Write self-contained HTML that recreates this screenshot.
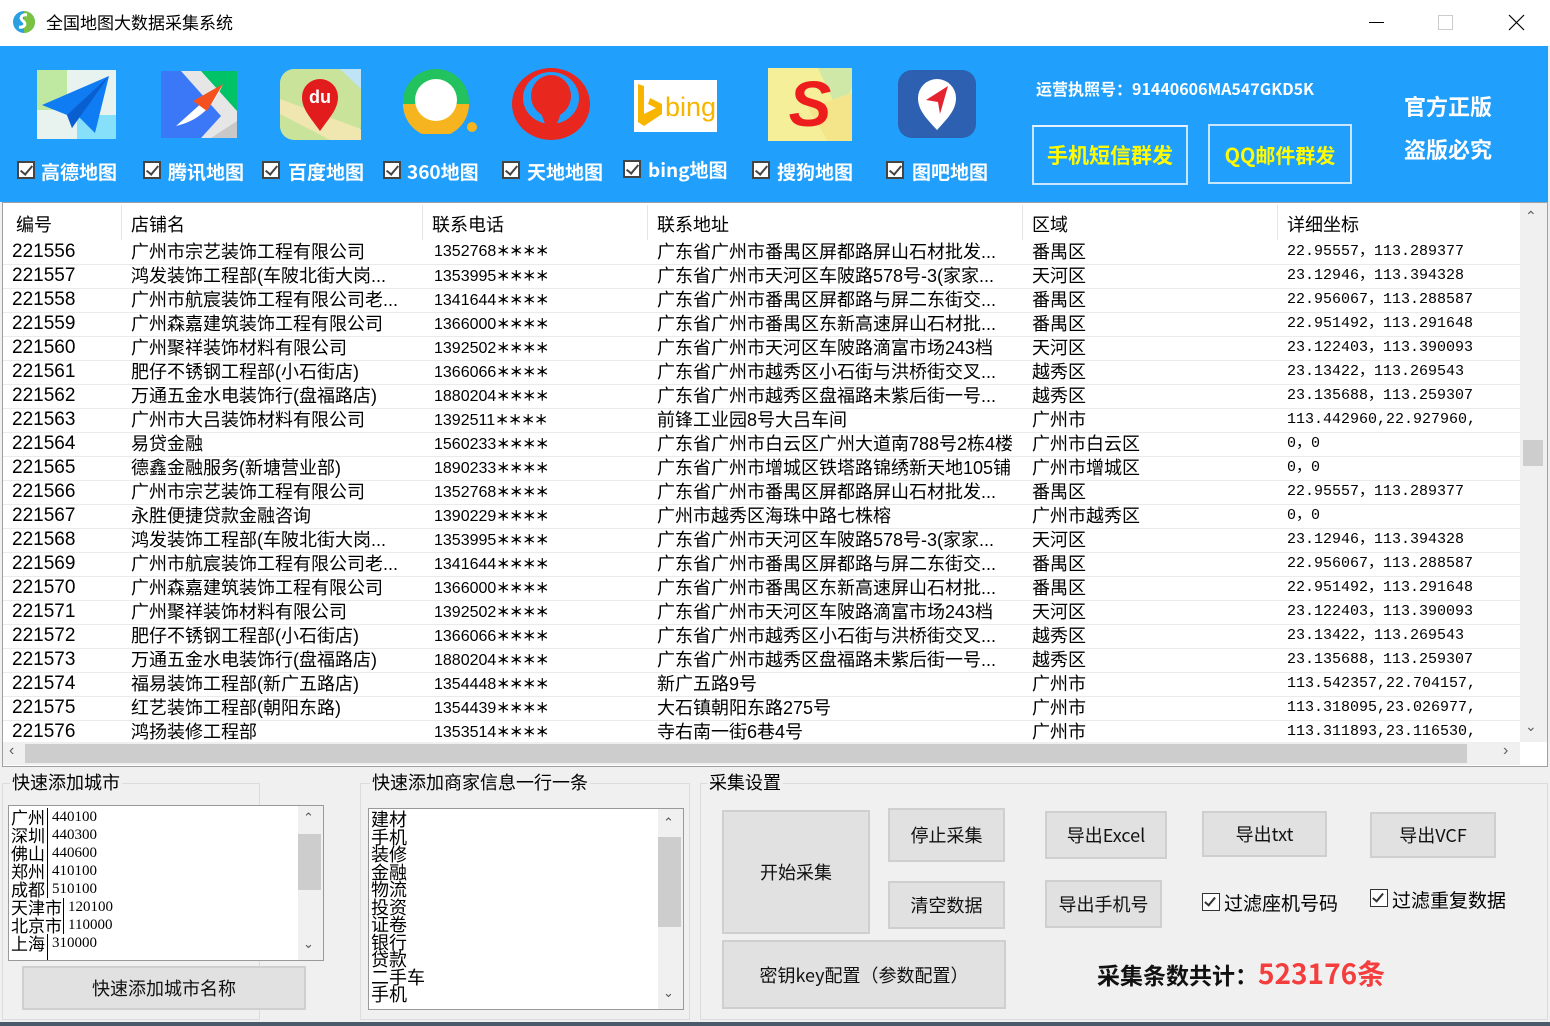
<!DOCTYPE html>
<html><head><meta charset="utf-8"><style>
*{margin:0;padding:0;box-sizing:border-box}
body{width:1550px;height:1026px;background:#f0f0f0;position:relative;overflow:hidden;font-family:"Liberation Sans","Noto Sans CJK SC",sans-serif}
.a{position:absolute}
.cjk{font-family:"Noto Sans CJK SC",sans-serif}
.cb{position:absolute;width:18px;height:18px;border:2px solid #444;background:#fff}
.cb::after{content:"";position:absolute;left:4px;top:0px;width:5px;height:10px;border:solid #444;border-width:0 2px 2px 0;transform:rotate(40deg)}
.lbl{position:absolute;color:#fff;font-weight:bold;font-size:19px;top:158px;font-family:"Noto Sans CJK SC",sans-serif}
table{border-collapse:collapse;table-layout:fixed}
td{height:24px;border-bottom:1px solid #eaeaea;white-space:nowrap;overflow:hidden;font-size:18px;line-height:22px;color:#000;padding-left:9px;font-family:"Liberation Sans","Noto Sans CJK SC",sans-serif}
td.n{font-size:19px;padding-left:9px;font-family:"Liberation Sans Narrow","Liberation Sans",sans-serif}
td.p{font-size:16px;font-family:"Liberation Sans Narrow","Liberation Sans","Noto Sans CJK SC",sans-serif;padding-left:11px}
td.p span{font-size:14px;font-weight:bold;letter-spacing:-1px}
td.c{font-size:15px;font-family:"Liberation Mono","Noto Sans CJK SC",monospace}
.btn{position:absolute;background:#e1e1e1;border:2px solid #cfcfcf;display:flex;align-items:center;justify-content:center;font-size:18px;color:#111;font-family:"Noto Sans CJK SC",sans-serif}
.gb{position:absolute;border:1px solid #dcdcdc}
.gt{position:absolute;background:#f0f0f0;font-size:18px;font-family:"Noto Sans CJK SC",sans-serif;padding:0 2px;line-height:20px}
</style></head><body>
<div class="a" style="left:0;top:0;width:1550px;height:46px;background:#fff"></div>
<svg class="a" style="left:12px;top:10px" width="24" height="24" viewBox="0 0 24 24"><circle cx="12" cy="12" r="11" fill="#2aa0e0"/><path d="M12 1a11 11 0 0 1 0 22z" fill="#7cc242"/><path d="M15 5c-5-1-8 3-4 6s1 7-4 6" stroke="#fff" stroke-width="3" fill="none"/></svg>
<div class="a cjk" style="left:46px;top:9px;font-size:17px;color:#000">全国地图大数据采集系统</div>
<div class="a" style="left:1369px;top:22px;width:15px;height:1px;background:#000"></div>
<div class="a" style="left:1438px;top:15px;width:15px;height:15px;border:1px solid #ccc"></div>
<svg class="a" style="left:1508px;top:14px" width="17" height="17"><path d="M1 1L16 16M16 1L1 16" stroke="#000" stroke-width="1.2"/></svg>
<div class="a" style="left:0;top:46px;width:1548px;height:156px;background:#209ffd"></div>
<svg class="a" style="left:37px;top:70px" width="79" height="69" viewBox="0 0 79 69"><rect width="79" height="69" fill="#e8f3f0"/><rect width="30" height="40" fill="#bfe9a0"/><rect x="40" y="45" width="39" height="24" fill="#86e0fa"/><path d="M72 6L5 35 30 45 35 58 42 47 58 63z" fill="#0f7cf4"/><path d="M72 6L30 45 35 58z" fill="#0a5fd0"/></svg>
<svg class="a" style="left:161px;top:71px" width="76" height="67" viewBox="0 0 76 67"><rect width="76" height="67" fill="#3b78f7"/><path d="M20 0H76V67H40L60 45 20 0z" fill="#e6e6e6"/><path d="M40 0H76V40z" fill="#00c266"/><path d="M50 67H76V50z" fill="#c8c8c8"/><path d="M62 13L15 55 C35 50 50 40 62 13z" fill="#fff"/><path d="M62 13L32 30 46 40z" fill="#f4511e"/></svg>
<svg class="a" style="left:280px;top:69px" width="81" height="71" viewBox="0 0 81 71"><rect width="81" height="71" rx="14" fill="#c9e39a"/><path d="M0 30L81 60V71H50L0 45z" fill="#efe6b0"/><path d="M60 0H81V20z" fill="#bfe4f6"/><path d="M40 62C30 48 22 40 22 28a18 18 0 0 1 36 0c0 12-8 20-18 34z" fill="#e21c1c"/><text x="40" y="34" font-size="18" fill="#fff" text-anchor="middle" font-family="Liberation Sans" font-weight="bold">du</text></svg>
<svg class="a" style="left:398px;top:68px" width="80" height="66" viewBox="0 0 80 66"><circle cx="38" cy="34" r="33" fill="#22c35e"/><path d="M5 36a33 33 0 0 0 66 0z" fill="#f6b51e"/><circle cx="38" cy="32" r="21" fill="#fff"/><circle cx="74" cy="59" r="5" fill="#f6b51e"/></svg>
<svg class="a" style="left:511px;top:68px" width="80" height="72" viewBox="0 0 80 72"><ellipse cx="40" cy="36" rx="39" ry="36" fill="#e8281e"/><ellipse cx="40" cy="30" rx="28" ry="26" fill="#209ffd"/><ellipse cx="40" cy="28" rx="20" ry="21" fill="#e8281e"/><path d="M30 45L40 72 50 45z" fill="#e8281e"/></svg>
<svg class="a" style="left:634px;top:80px" width="83" height="52" viewBox="0 0 83 52"><rect width="83" height="52" fill="#fff"/><path d="M4 4L10 6V34L22 28 14 24 16 18 28 24V34L10 46 4 42z" fill="#f7b500"/><text x="31" y="36" font-size="27" fill="#f7b500" font-family="Liberation Sans Narrow,Liberation Sans">bing</text></svg>
<svg class="a" style="left:768px;top:68px" width="84" height="73" viewBox="0 0 84 73"><rect width="84" height="73" fill="#f5ef9a"/><path d="M50 0H84V20L60 73H84V73z" fill="#cfe8a8"/><path d="M40 40L84 25V73H60z" fill="#f4e58a"/><text x="42" y="58" font-size="64" fill="#ee1d1d" font-family="Liberation Sans" font-weight="bold" text-anchor="middle" font-style="italic">S</text></svg>
<svg class="a" style="left:898px;top:70px" width="78" height="68" viewBox="0 0 78 68"><rect width="78" height="68" rx="14" fill="#2d60b0"/><path d="M39 60C28 48 20 40 20 28a19 19 0 0 1 38 0c0 12-8 20-19 32z" fill="#fff"/><path d="M50 16L28 30 40 32 42 44z" fill="#e52230"/></svg>
<div class="cb" style="left:17px;top:161px"></div><div class="lbl" style="left:41px">高德地图</div>
<div class="cb" style="left:143px;top:161px"></div><div class="lbl" style="left:168px">腾讯地图</div>
<div class="cb" style="left:262px;top:161px"></div><div class="lbl" style="left:288px">百度地图</div>
<div class="cb" style="left:383px;top:161px"></div><div class="lbl" style="left:407px">360地图</div>
<div class="cb" style="left:502px;top:161px"></div><div class="lbl" style="left:527px">天地地图</div>
<div class="cb" style="left:623px;top:160px"></div><div class="lbl" style="left:648px;top:156px">bing地图</div>
<div class="cb" style="left:752px;top:161px"></div><div class="lbl" style="left:777px">搜狗地图</div>
<div class="cb" style="left:886px;top:161px"></div><div class="lbl" style="left:912px">图吧地图</div>
<div class="a cjk" style="left:1036px;top:76px;color:#fff;font-weight:bold;font-size:16px">运营执照号：91440606MA547GKD5K</div>
<div class="a cjk" style="left:1032px;top:125px;width:156px;height:60px;border:2px solid #c9e6ff;border-top-color:#e6f3ff;color:#fffb00;font-weight:bold;font-size:21px;display:flex;align-items:center;justify-content:center">手机短信群发</div>
<div class="a cjk" style="left:1208px;top:124px;width:144px;height:60px;border:2px solid #c9e6ff;color:#fffb00;font-weight:bold;font-size:20px;display:flex;align-items:center;justify-content:center">QQ邮件群发</div>
<div class="a cjk" style="left:1404px;top:90px;color:#fff;font-size:22px;font-weight:bold">官方正版</div>
<div class="a cjk" style="left:1404px;top:133px;color:#fff;font-size:22px;font-weight:bold">盗版必究</div>
<div class="a" style="left:2px;top:202px;width:1546px;height:565px;background:#fff;border:1px solid #a0a0a0"></div>
<div class="a" style="left:3px;top:205px;height:35px;width:1517px">
 <div class="a cjk" style="left:13px;top:6px;font-size:18px">编号</div>
 <div class="a" style="left:118px;top:0;width:1px;height:35px;background:#e5e5e5"></div>
 <div class="a cjk" style="left:128px;top:6px;font-size:18px">店铺名</div>
 <div class="a" style="left:419px;top:0;width:1px;height:35px;background:#e5e5e5"></div>
 <div class="a cjk" style="left:429px;top:6px;font-size:18px">联系电话</div>
 <div class="a" style="left:644px;top:0;width:1px;height:35px;background:#e5e5e5"></div>
 <div class="a cjk" style="left:654px;top:6px;font-size:18px">联系地址</div>
 <div class="a" style="left:1019px;top:0;width:1px;height:35px;background:#e5e5e5"></div>
 <div class="a cjk" style="left:1029px;top:6px;font-size:18px">区域</div>
 <div class="a" style="left:1274px;top:0;width:1px;height:35px;background:#e5e5e5"></div>
 <div class="a cjk" style="left:1284px;top:6px;font-size:18px">详细坐标</div>
</div>
<div class="a" style="left:3px;top:240px;width:1517px;height:502px;overflow:hidden">
<table style="width:1517px">
<colgroup><col style="width:119px"><col style="width:301px"><col style="width:225px"><col style="width:375px"><col style="width:255px"><col style="width:242px"></colgroup>
<tr><td class="n">221556</td><td>广州市宗艺装饰工程有限公司</td><td class="p">1352768<span>＊＊＊＊</span></td><td>广东省广州市番禺区屏都路屏山石材批发...</td><td>番禺区</td><td class="c">22.95557，113.289377</td></tr>
<tr><td class="n">221557</td><td>鸿发装饰工程部(车陂北街大岗...</td><td class="p">1353995<span>＊＊＊＊</span></td><td>广东省广州市天河区车陂路578号-3(家家...</td><td>天河区</td><td class="c">23.12946，113.394328</td></tr>
<tr><td class="n">221558</td><td>广州市航宸装饰工程有限公司老...</td><td class="p">1341644<span>＊＊＊＊</span></td><td>广东省广州市番禺区屏都路与屏二东街交...</td><td>番禺区</td><td class="c">22.956067，113.288587</td></tr>
<tr><td class="n">221559</td><td>广州森嘉建筑装饰工程有限公司</td><td class="p">1366000<span>＊＊＊＊</span></td><td>广东省广州市番禺区东新高速屏山石材批...</td><td>番禺区</td><td class="c">22.951492，113.291648</td></tr>
<tr><td class="n">221560</td><td>广州聚祥装饰材料有限公司</td><td class="p">1392502<span>＊＊＊＊</span></td><td>广东省广州市天河区车陂路滴富市场243档</td><td>天河区</td><td class="c">23.122403，113.390093</td></tr>
<tr><td class="n">221561</td><td>肥仔不锈钢工程部(小石街店)</td><td class="p">1366066<span>＊＊＊＊</span></td><td>广东省广州市越秀区小石街与洪桥街交叉...</td><td>越秀区</td><td class="c">23.13422，113.269543</td></tr>
<tr><td class="n">221562</td><td>万通五金水电装饰行(盘福路店)</td><td class="p">1880204<span>＊＊＊＊</span></td><td>广东省广州市越秀区盘福路未紫后街一号...</td><td>越秀区</td><td class="c">23.135688，113.259307</td></tr>
<tr><td class="n">221563</td><td>广州市大吕装饰材料有限公司</td><td class="p">1392511<span>＊＊＊＊</span></td><td>前锋工业园8号大吕车间</td><td>广州市</td><td class="c">113.442960,22.927960,</td></tr>
<tr><td class="n">221564</td><td>易贷金融</td><td class="p">1560233<span>＊＊＊＊</span></td><td>广东省广州市白云区广州大道南788号2栋4楼</td><td>广州市白云区</td><td class="c">0，0</td></tr>
<tr><td class="n">221565</td><td>德鑫金融服务(新塘营业部)</td><td class="p">1890233<span>＊＊＊＊</span></td><td>广东省广州市增城区铁塔路锦绣新天地105铺</td><td>广州市增城区</td><td class="c">0，0</td></tr>
<tr><td class="n">221566</td><td>广州市宗艺装饰工程有限公司</td><td class="p">1352768<span>＊＊＊＊</span></td><td>广东省广州市番禺区屏都路屏山石材批发...</td><td>番禺区</td><td class="c">22.95557，113.289377</td></tr>
<tr><td class="n">221567</td><td>永胜便捷贷款金融咨询</td><td class="p">1390229<span>＊＊＊＊</span></td><td>广州市越秀区海珠中路七株榕</td><td>广州市越秀区</td><td class="c">0，0</td></tr>
<tr><td class="n">221568</td><td>鸿发装饰工程部(车陂北街大岗...</td><td class="p">1353995<span>＊＊＊＊</span></td><td>广东省广州市天河区车陂路578号-3(家家...</td><td>天河区</td><td class="c">23.12946，113.394328</td></tr>
<tr><td class="n">221569</td><td>广州市航宸装饰工程有限公司老...</td><td class="p">1341644<span>＊＊＊＊</span></td><td>广东省广州市番禺区屏都路与屏二东街交...</td><td>番禺区</td><td class="c">22.956067，113.288587</td></tr>
<tr><td class="n">221570</td><td>广州森嘉建筑装饰工程有限公司</td><td class="p">1366000<span>＊＊＊＊</span></td><td>广东省广州市番禺区东新高速屏山石材批...</td><td>番禺区</td><td class="c">22.951492，113.291648</td></tr>
<tr><td class="n">221571</td><td>广州聚祥装饰材料有限公司</td><td class="p">1392502<span>＊＊＊＊</span></td><td>广东省广州市天河区车陂路滴富市场243档</td><td>天河区</td><td class="c">23.122403，113.390093</td></tr>
<tr><td class="n">221572</td><td>肥仔不锈钢工程部(小石街店)</td><td class="p">1366066<span>＊＊＊＊</span></td><td>广东省广州市越秀区小石街与洪桥街交叉...</td><td>越秀区</td><td class="c">23.13422，113.269543</td></tr>
<tr><td class="n">221573</td><td>万通五金水电装饰行(盘福路店)</td><td class="p">1880204<span>＊＊＊＊</span></td><td>广东省广州市越秀区盘福路未紫后街一号...</td><td>越秀区</td><td class="c">23.135688，113.259307</td></tr>
<tr><td class="n">221574</td><td>福易装饰工程部(新广五路店)</td><td class="p">1354448<span>＊＊＊＊</span></td><td>新广五路9号</td><td>广州市</td><td class="c">113.542357,22.704157,</td></tr>
<tr><td class="n">221575</td><td>红艺装饰工程部(朝阳东路)</td><td class="p">1354439<span>＊＊＊＊</span></td><td>大石镇朝阳东路275号</td><td>广州市</td><td class="c">113.318095,23.026977,</td></tr>
<tr><td class="n">221576</td><td>鸿扬装修工程部</td><td class="p">1353514<span>＊＊＊＊</span></td><td>寺右南一街6巷4号</td><td>广州市</td><td class="c">113.311893,23.116530,</td></tr>
</table></div>
<div class="a" style="left:1520px;top:203px;width:27px;height:539px;background:#f0f0f0"></div>
<div class="a" style="left:1523px;top:440px;width:20px;height:26px;background:#cdcdcd"></div>
<div class="a" style="left:1525px;top:208px;font-size:14px;color:#606060">&#8963;</div>
<div class="a" style="left:1525px;top:718px;font-size:14px;color:#606060">&#8964;</div>
<div class="a" style="left:3px;top:742px;width:1517px;height:23px;background:#f0f0f0"></div>
<div class="a" style="left:25px;top:744px;width:1442px;height:19px;background:#cdcdcd"></div>
<div class="a" style="left:9px;top:742px;font-size:16px;color:#606060">&lsaquo;</div>
<div class="a" style="left:1503px;top:742px;font-size:16px;color:#606060">&rsaquo;</div>
<div class="gb" style="left:2px;top:783px;width:258px;height:237px"></div>
<div class="gt" style="left:10px;top:772px">快速添加城市</div>
<div class="a" style="left:8px;top:805px;width:316px;height:156px;background:#fff;border:1px solid #999;overflow:hidden">
 <div class="a cjk" style="left:2px;top:2px;font-size:17px;line-height:18px;white-space:pre">广州
深圳
佛山
郑州
成都
天津市
北京市
上海
</div>
 <div class="a" style="left:38px;top:2px;width:1px;height:90px;background:#000"></div>
 <div class="a" style="left:54px;top:92px;width:1px;height:36px;background:#000"></div>
 <div class="a" style="left:38px;top:128px;width:1px;height:26px;background:#000"></div>
 <div class="a" style="left:43px;top:2px;font-size:15px;line-height:18px;font-family:'Liberation Serif',serif">440100<br>440300<br>440600<br>410100<br>510100</div>
 <div class="a" style="left:59px;top:92px;font-size:15px;line-height:18px;font-family:'Liberation Serif',serif">120100<br>110000</div>
 <div class="a" style="left:43px;top:128px;font-size:15px;line-height:18px;font-family:'Liberation Serif',serif">310000</div>
 <div class="a" style="left:289px;top:0;width:25px;height:154px;background:#f0f0f0"></div>
 <div class="a" style="left:289px;top:28px;width:23px;height:56px;background:#cdcdcd"></div>
 <div class="a" style="left:294px;top:4px;font-size:13px;color:#555">&#8963;</div>
 <div class="a" style="left:294px;top:130px;font-size:13px;color:#555">&#8964;</div>
</div>
<div class="btn" style="left:22px;top:966px;width:284px;height:44px">快速添加城市名称</div>
<div class="gb" style="left:360px;top:783px;width:330px;height:237px"></div>
<div class="gt" style="left:370px;top:772px">快速添加商家信息一行一条</div>
<div class="a" style="left:368px;top:808px;width:316px;height:202px;background:#fff;border:1px solid #999;overflow:hidden">
 <div class="a cjk" style="left:2px;top:2px;font-size:18px;line-height:17.5px">建材<br>手机<br>装修<br>金融<br>物流<br>投资<br>证卷<br>银行<br>贷款<br>二手车<br>手机</div>
 <div class="a" style="left:289px;top:0;width:25px;height:200px;background:#f0f0f0"></div>
 <div class="a" style="left:289px;top:28px;width:23px;height:90px;background:#cdcdcd"></div>
 <div class="a" style="left:294px;top:6px;font-size:13px;color:#555">&#8963;</div>
 <div class="a" style="left:294px;top:176px;font-size:13px;color:#555">&#8964;</div>
</div>
<div class="gb" style="left:700px;top:783px;width:848px;height:237px"></div>
<div class="gt" style="left:707px;top:772px">采集设置</div>
<div class="btn" style="left:722px;top:810px;width:148px;height:124px">开始采集</div>
<div class="btn" style="left:888px;top:808px;width:117px;height:54px">停止采集</div>
<div class="btn" style="left:888px;top:881px;width:117px;height:48px">清空数据</div>
<div class="btn" style="left:722px;top:940px;width:284px;height:69px">密钥key配置（参数配置）</div>
<div class="btn" style="left:1045px;top:811px;width:122px;height:48px">导出Excel</div>
<div class="btn" style="left:1202px;top:811px;width:125px;height:46px">导出txt</div>
<div class="btn" style="left:1370px;top:812px;width:126px;height:46px">导出VCF</div>
<div class="btn" style="left:1045px;top:880px;width:117px;height:48px">导出手机号</div>
<div class="a" style="left:1202px;top:893px;width:18px;height:18px;border:1px solid #333;background:#fff"></div>
<div class="a" style="left:1207px;top:895px;width:6px;height:11px;border:solid #333;border-width:0 2px 2px 0;transform:rotate(40deg)"></div>
<div class="a cjk" style="left:1224px;top:889px;font-size:19px">过滤座机号码</div>
<div class="a" style="left:1370px;top:889px;width:18px;height:18px;border:1px solid #333;background:#fff"></div>
<div class="a" style="left:1375px;top:891px;width:6px;height:11px;border:solid #333;border-width:0 2px 2px 0;transform:rotate(40deg)"></div>
<div class="a cjk" style="left:1392px;top:886px;font-size:19px">过滤重复数据</div>
<div class="a cjk" style="left:1097px;top:953px;font-size:23px;font-weight:bold;color:#111">采集条数共计：<span style="color:#f43e3e;font-size:28px">523176条</span></div>
<div class="a" style="left:0;top:1022px;width:1550px;height:4px;background:#4a5a6a"></div>
</body></html>
